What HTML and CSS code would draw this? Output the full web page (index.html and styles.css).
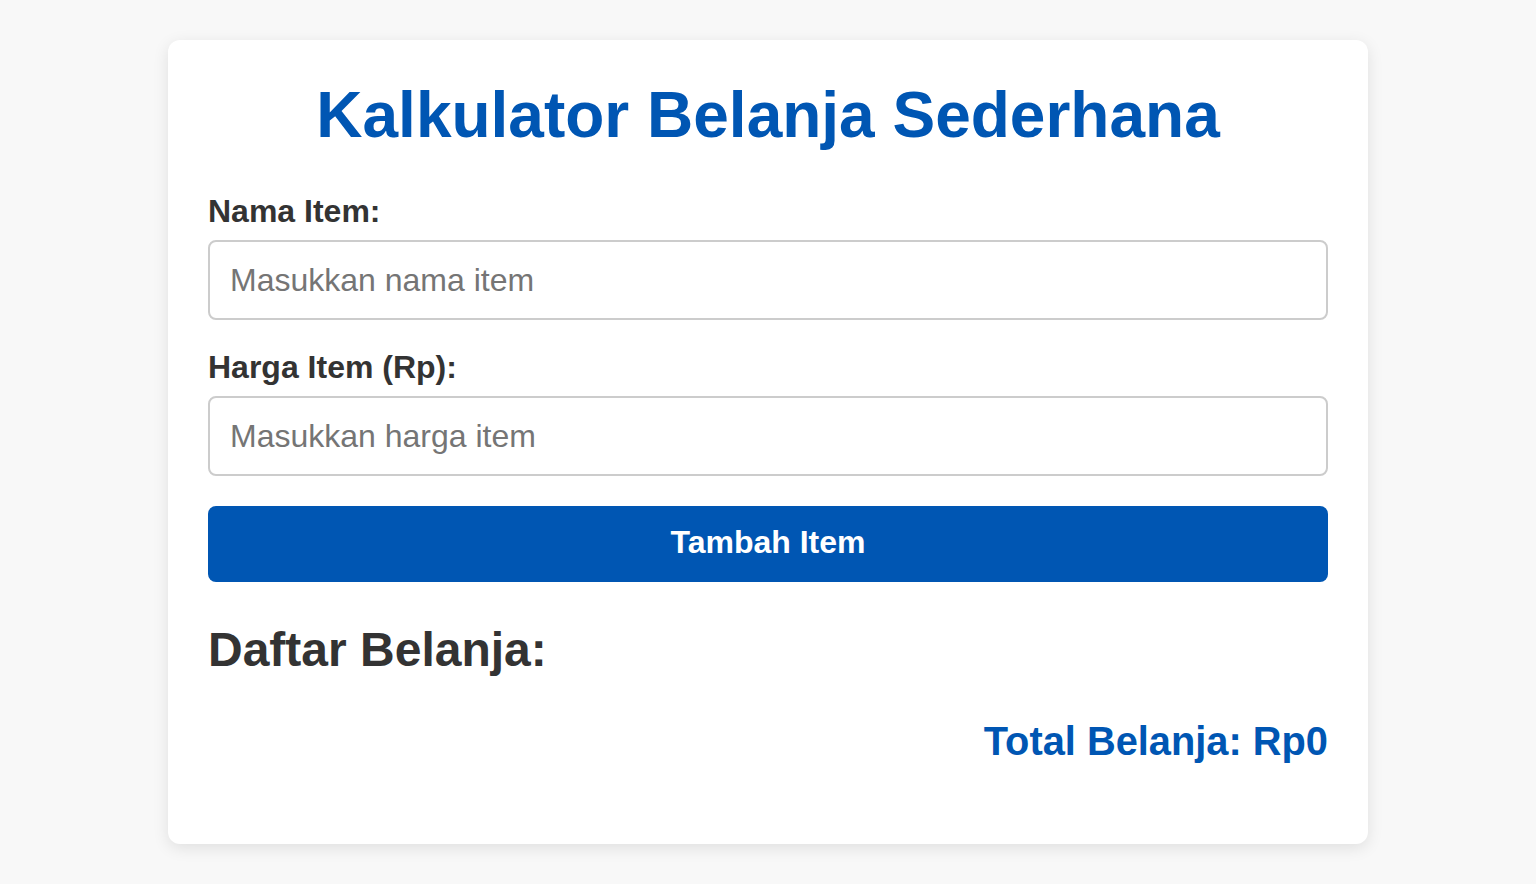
FILE: index.html
```html
<!DOCTYPE html>
<html lang="id">
<head>
<meta charset="utf-8">
<title>Kalkulator Belanja Sederhana</title>
<link rel="stylesheet" href="styles.css">
</head>
<body>
<div class="card">
  <h1 class="title">Kalkulator Belanja Sederhana</h1>
  <div class="field">
    <label class="label" for="nama">Nama Item:</label>
    <input class="input" id="nama" type="text" placeholder="Masukkan nama item">
  </div>
  <div class="field">
    <label class="label" for="harga">Harga Item (Rp):</label>
    <input class="input" id="harga" type="number" placeholder="Masukkan harga item">
  </div>
  <button class="btn" type="button">Tambah Item</button>
  <h2 class="list-title">Daftar Belanja:</h2>
  <ul class="list"></ul>
  <div class="total">Total Belanja: Rp0</div>
</div>
</body>
</html>
```

FILE: styles.css
```css
* { box-sizing: border-box; }
html, body { margin: 0; padding: 0; }
body {
  background: #f8f8f8;
  font-family: "Liberation Sans", Arial, sans-serif;
  color: #333;
  font-size: 32px;
}
.card {
  width: 1200px;
  margin: 40px auto;
  background: #fff;
  border-radius: 12px;
  box-shadow: 0 4px 16px rgba(0, 0, 0, 0.1);
  padding: 38px 40px 41px;
}
.title {
  margin: 0 0 41px;
  font-size: 64px;
  font-weight: bold;
  color: #0056b3;
  text-align: center;
}
.field { display: flex; flex-direction: column; }
.field + .field { margin-top: 29px; }
.label {
  font-weight: bold;
  font-size: 32px;
  margin-bottom: 10px;
}
.input {
  height: 80px;
  width: 100%;
  border: 2px solid #ccc;
  border-radius: 8px;
  padding: 0 20px;
  font-family: inherit;
  font-size: 32px;
  color: #333;
  background: #fff;
  outline: none;
}
.input::placeholder { color: #757575; }
.input::-webkit-outer-spin-button,
.input::-webkit-inner-spin-button { -webkit-appearance: none; margin: 0; }
.btn {
  display: block;
  width: 100%;
  height: 76px;
  margin-top: 30px;
  border: none;
  border-radius: 8px;
  background: #0056b3;
  color: #fff;
  font-family: inherit;
  font-size: 32px;
  font-weight: bold;
  padding: 0 0 3px;
  cursor: pointer;
}
.list-title {
  margin: 40px 0 0;
  font-size: 48px;
  font-weight: bold;
  color: #333;
}
.list { list-style: none; margin: 0; padding: 0; }
.total {
  margin-top: 42px;
  margin-bottom: 39px;
  text-align: right;
  font-size: 39.8px;
  font-weight: bold;
  color: #0056b3;
}
```
